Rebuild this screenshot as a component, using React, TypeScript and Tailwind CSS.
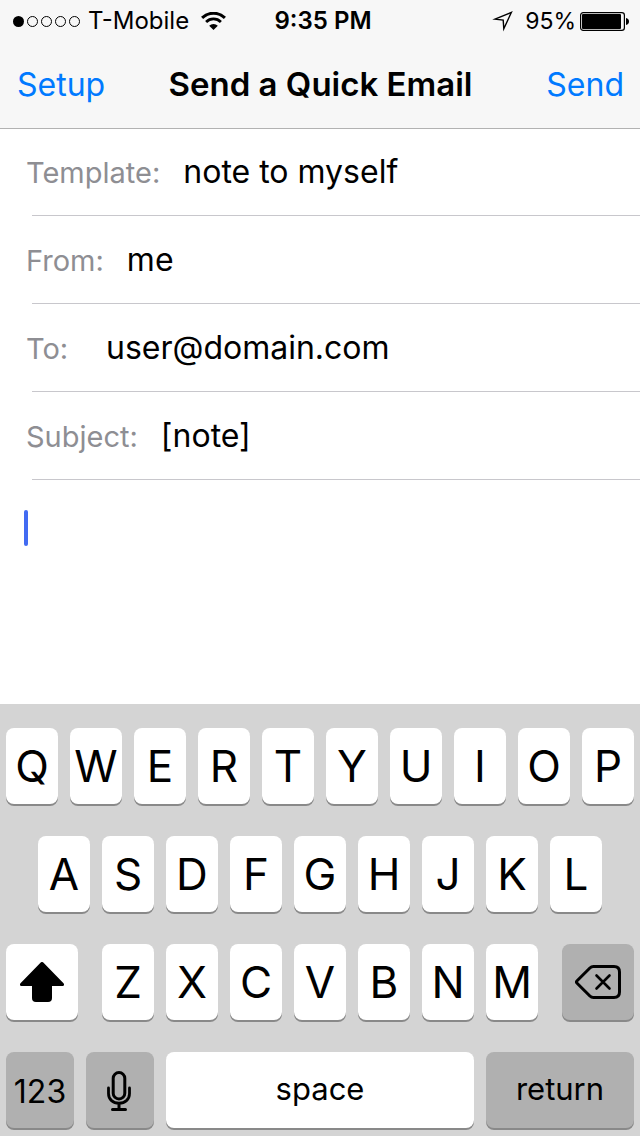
import { useState, type ReactNode } from 'react';
import clsx from 'clsx';

type FieldProps = {
  id: string;
  label: string;
  value: string;
  onChange: (value: string) => void;
};

const TOP_ROW = 'QWERTYUIOP'.split('');
const HOME_ROW = 'ASDFGHJKL'.split('');
const BOTTOM_ROW = 'ZXCVBNM'.split('');

function SignalDots() {
  return (
    <div className="flex gap-[3px]" role="img" aria-label="Signal: 1 of 5">
      <span className="size-[11px] rounded-full bg-black" />
      {[1, 2, 3, 4].map((n) => (
        <span key={n} className="size-[11px] rounded-full border border-black" />
      ))}
    </div>
  );
}

function WifiIcon() {
  return (
    <svg width="25" height="18" viewBox="0 0 25 18" fill="none" stroke="#000" aria-label="Wi-Fi">
      <path d="M1.100 5.900a16.200 16.200 0 0 1 22.800 0" strokeWidth="3" />
      <path d="M5.100 10a10.500 10.500 0 0 1 14.800 0" strokeWidth="2.800" />
      <path d="M12.500 18 8.200 13.700a6.100 6.100 0 0 1 8.600 0z" fill="#000" stroke="none" />
    </svg>
  );
}

function LocationIcon() {
  return (
    <svg width="21" height="21" viewBox="0 0 21 21" fill="none" stroke="#000" aria-label="Location">
      <path d="M19.400 1.300 3 8.200l8.200.9.600 8.700z" strokeWidth="1.400" strokeMiterlimit="10" />
    </svg>
  );
}

function BatteryIcon() {
  return (
    <svg width="49" height="19" viewBox="0 0 49 19" aria-label="Battery">
      <rect x="0.600" y="0.600" width="43.800" height="17.800" rx="2.600" fill="none" stroke="#000" strokeWidth="1.200" />
      <rect x="2" y="2" width="39" height="15" rx="1" fill="#000" />
      <path d="M46 6c2 .3 3 1.600 3 3.500s-1 3.200-3 3.500z" fill="#000" />
    </svg>
  );
}

function ShiftIcon() {
  return (
    <svg width="44" height="40" viewBox="0 0 44 40" aria-hidden="true">
      <path d="M20.700.6a1.800 1.800 0 0 1 2.600 0L43.500 21.200c1 1.100.5 2.800-1 2.800H32v12c0 2.700-1.300 4-4 4H16c-2.700 0-4-1.300-4-4V24H1.500c-1.500 0-2-1.700-1-2.800z" />
    </svg>
  );
}

function DeleteIcon() {
  return (
    <svg width="46" height="34" viewBox="0 0 46 34" fill="none" stroke="#000" strokeWidth="3" strokeLinecap="round" strokeLinejoin="round" aria-hidden="true">
      <path d="M18.500 1.500H39c3.700 0 5.500 1.800 5.500 5.500v20c0 3.700-1.800 5.500-5.500 5.500H18.500c-1.500 0-2.600-.5-3.600-1.500L2.100 18.300c-.8-.8-.8-1.800 0-2.600L14.900 3c1-1 2.100-1.500 3.600-1.500z" />
      <path d="m21.500 10.500 13 13m0-13-13 13" strokeWidth="2.600" />
    </svg>
  );
}

function MicIcon() {
  return (
    <svg width="26" height="40" viewBox="0 0 26 40" fill="none" stroke="#000" strokeWidth="3" strokeLinecap="round" aria-hidden="true">
      <rect x="6.200" y="1.500" width="11.600" height="26.500" rx="5.800" />
      <path d="M1.500 17v5.500C1.500 28.600 6 32.200 12 32.200s10.500-3.600 10.500-9.700V17" strokeWidth="2.800" />
      <path d="M12 33v5M5.500 38.500h13" />
    </svg>
  );
}

function Field({ id, label, value, onChange }: FieldProps) {
  return (
    <div>
      <div className="flex h-[87px] items-baseline gap-[23px] pt-[23px] pl-[26px]">
        <label htmlFor={id} className="min-w-[57px] text-[29px] leading-[42px] text-[#8e8e93]">
          {label}
        </label>
        <input
          id={id}
          value={value}
          onChange={(e) => onChange(e.target.value)}
          className="min-w-0 flex-1 bg-transparent text-[32px] leading-[42px] text-black outline-none"
        />
      </div>
      <hr className="ml-8 border-[#c8c7cc]" />
    </div>
  );
}

type KeyProps = {
  children: ReactNode;
  label?: string;
  dark?: boolean;
  className?: string;
  onClick?: () => void;
};

function Key({ children, label, dark, className = 'flex-1 text-[44px]', onClick }: KeyProps) {
  return (
    <button
      type="button"
      aria-label={label}
      onClick={onClick}
      className={clsx(
        'flex h-[76px] min-w-0 items-center justify-center rounded-lg text-black shadow-[0_2px_0_#898989]',
        dark ? 'bg-[#b0b0b0]' : 'bg-white',
        className,
      )}
    >
      {children}
    </button>
  );
}

export default function App() {
  const [template, setTemplate] = useState('note to myself');
  const [from, setFrom] = useState('me');
  const [to, setTo] = useState('user@domain.com');
  const [subject, setSubject] = useState('[note]');
  const [body, setBody] = useState('');

  const type = (text: string) => setBody((b) => b + text);
  const letters = (row: string[]) =>
    row.map((letter) => (
      <Key key={letter} onClick={() => type(letter)}>
        {letter}
      </Key>
    ));

  return (
    <div className="flex min-h-screen flex-col bg-white font-[Inter,sans-serif]">
      <header className="bg-[#f7f7f7] text-black shadow-[0_1px_0_#b2b2b2]">
        {/* Status bar */}
        <div className="grid h-[42px] grid-cols-[1fr_auto_1fr] items-center pr-[11px] pl-[13px] text-[24px]">
          <div className="flex items-center">
            <SignalDots />
            <span className="mr-3 ml-2">T-Mobile</span>
            <WifiIcon />
          </div>
          <span className="pl-1 font-semibold">9:35 PM</span>
          <div className="flex items-center justify-end">
            <LocationIcon />
            <span className="mr-1 ml-3 text-[23px]">95%</span>
            <BatteryIcon />
          </div>
        </div>

        {/* Navigation bar */}
        <div className="grid h-[86px] grid-cols-[1fr_auto_1fr] items-center pr-4 pl-[17px] text-[32px]">
          <button type="button" className="justify-self-start text-[#007aff]">
            Setup
          </button>
          <h1 className="text-[33px] font-semibold">Send a Quick Email</h1>
          <button type="button" className="justify-self-end text-[#007aff]">
            Send
          </button>
        </div>
      </header>

      <main className="flex flex-1 flex-col">
        <Field id="template" label="Template:" value={template} onChange={setTemplate} />
        <Field id="from" label="From:" value={from} onChange={setFrom} />
        <Field id="to" label="To:" value={to} onChange={setTo} />
        <Field id="subject" label="Subject:" value={subject} onChange={setSubject} />

        <div className="relative flex flex-1">
          <textarea
            aria-label="Message"
            value={body}
            onChange={(e) => setBody(e.target.value)}
            className="min-h-40 flex-1 resize-none bg-transparent px-6 pt-7 text-[32px] leading-[42px] text-black outline-none"
          />
          {body === '' && (
            <span className="pointer-events-none absolute top-[30px] left-6 h-9 w-1 rounded-xs bg-[#426bf2]" />
          )}
        </div>
      </main>

      {/* Keyboard */}
      <div className="flex flex-col gap-8 bg-[#d4d4d4] px-1.5 pt-6 pb-2">
        <div className="flex gap-3">{letters(TOP_ROW)}</div>
        <div className="flex gap-3 px-8">{letters(HOME_ROW)}</div>
        <div className="flex gap-6">
          <Key label="Shift" className="w-[72px]">
            <ShiftIcon />
          </Key>
          <div className="flex flex-1 gap-3">{letters(BOTTOM_ROW)}</div>
          <Key label="Delete" dark className="w-[72px]" onClick={() => setBody((b) => b.slice(0, -1))}>
            <DeleteIcon />
          </Key>
        </div>
        <div className="flex gap-3">
          <Key dark className="w-[68px] pt-1 text-[32px]">
            123
          </Key>
          <Key label="Dictate" dark className="w-[68px] pt-0.5">
            <MicIcon />
          </Key>
          <Key className="flex-1 pb-0.5 text-[31px]" onClick={() => type(' ')}>
            space
          </Key>
          <Key dark className="w-[148px] pb-0.5 text-[31px]" onClick={() => type('\n')}>
            return
          </Key>
        </div>
      </div>
    </div>
  );
}
